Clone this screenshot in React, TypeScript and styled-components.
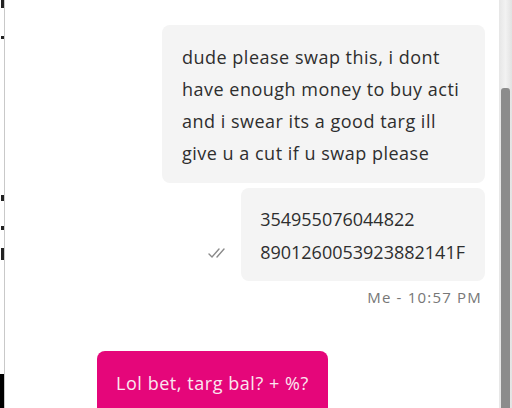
import React from "react";
import styled, { createGlobalStyle } from "styled-components";

const GlobalStyle = createGlobalStyle`
  html, body {
    margin: 0;
    padding: 0;
    background: #ffffff;
  }
  body {
    font-family: "Open Sans", "Noto Sans", sans-serif;
  }
`;

type Message = {
  id: number;
  text: string;
  width?: number;
};

// line breaks follow the wrapping of the original chat client
const sent: Message[] = [
  {
    id: 1,
    width: 283,
    text: "dude please swap this, i dont\nhave enough money to buy acti\nand i swear its a good targ ill\ngive u a cut if u swap please",
  },
  {
    id: 2,
    text: "354955076044822\n8901260053923882141F",
  },
];

const reply = "Lol bet, targ bal? + %?";

const App = () => {
  return (
    <>
      <GlobalStyle />
      <Screen>
        <Backdrop>
          <Mark $h={8} $top={0} />
          <Mark $h={3} $top={28} />
          <Mark $h={6} $top={156} />
          <Mark $h={4} $top={25} />
          <Mark $h={12} $top={18} />
          <BlackMark $top={114} />
        </Backdrop>
        <Panel>
          <Thread>
            <Bubble $mine $w={sent[0].width}>
              {sent[0].text}
            </Bubble>
            <MessageRow>
              <SeenIcon width="24" height="12" viewBox="0 0 24 12">
                <path d="M3 7 L6 10 L13 2" fill="none" stroke="#8a8a8a" strokeWidth="1.4" strokeLinecap="round" />
                <path d="M11 10 L18 2" fill="none" stroke="#8a8a8a" strokeWidth="1.4" strokeLinecap="round" />
              </SeenIcon>
              <Bubble $mine $digits>
                {sent[1].text}
              </Bubble>
            </MessageRow>
            <Meta>Me - 10:57 PM</Meta>
            <Spacer />
            <Bubble>{reply}</Bubble>
          </Thread>
          <ScrollTrack>
            <ScrollThumb />
          </ScrollTrack>
        </Panel>
      </Screen>
    </>
  );
};

export default App;

const Screen = styled.div`
  display: flex;
  width: 512px;
  height: 408px;
  overflow: hidden;
  background: #ffffff;
`;

const Backdrop = styled.div`
  display: flex;
  flex-direction: column;
  width: 4px;
  flex-shrink: 0;
  background: #ffffff;
`;

const Mark = styled.div<{ $h: number; $top: number }>`
  width: 3px;
  height: ${(p) => p.$h}px;
  margin-top: ${(p) => p.$top}px;
  margin-left: 1px;
  background: #222;
  flex-shrink: 0;
`;

const BlackMark = styled.div<{ $top: number }>`
  width: 4px;
  margin-top: ${(p) => p.$top}px;
  flex: 1;
  background: #000;
`;

const Panel = styled.div`
  display: flex;
  flex: 1;
  border-left: 1px solid #c9c9c9;
  background: #ffffff;
`;

const Thread = styled.div`
  display: flex;
  flex-direction: column;
  flex: 1;
  padding: 25px 14px 0 92px;
  overflow: hidden;

  & > * {
    flex-shrink: 0;
  }
`;

const Bubble = styled.div<{ $mine?: boolean; $digits?: boolean; $w?: number }>`
  align-self: ${(p) => (p.$mine ? "flex-end" : "flex-start")};
  width: ${(p) => (p.$w ? `${p.$w}px` : "auto")};
  padding: ${(p) =>
    p.$digits ? "15px 20px 12px 19px" : p.$mine ? "16px 20px 14px" : "16px 19px"};
  border-radius: 8px;
  background: ${(p) => (p.$mine ? "#f4f4f4" : "#e5067a")};
  color: ${(p) => (p.$mine ? "#2e2e2e" : "#fbe6f0")};
  font-size: 18px;
  line-height: ${(p) => (p.$digits ? "33px" : "32px")};
  white-space: pre;
  letter-spacing: ${(p) => (p.$digits ? "0" : p.$mine ? "0.5px" : "0.55px")};
`;

const MessageRow = styled.div`
  display: flex;
  align-items: flex-end;
  justify-content: flex-end;
  gap: 11px;
  margin-top: 5px;
`;

const SeenIcon = styled.svg`
  margin-bottom: 22px;
`;

const Meta = styled.div`
  align-self: flex-end;
  margin-top: 6px;
  margin-right: 3px;
  font-size: 15px;
  line-height: 20px;
  color: #777;
  letter-spacing: 1.2px;
`;

const Spacer = styled.div`
  height: 44px;
`;

const ScrollTrack = styled.div`
  display: flex;
  flex-direction: column;
  width: 13px;
  padding-top: 88px;
  box-sizing: border-box;
  background: linear-gradient(to right, #e6e6e6, #f2f2f2 50%, #e2e2e2);
`;

const ScrollThumb = styled.div`
  flex: 1;
  margin: 0 2px;
  border-radius: 3px 3px 0 0;
  background: #8c8c8c;
`;
